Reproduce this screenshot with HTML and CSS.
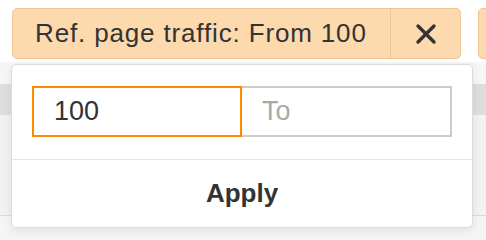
FILE: index.html
```html
<!DOCTYPE html>
<html>
<head>
<meta charset="utf-8">
<link rel="stylesheet" href="styles.css">
</head>
<body>
<div class="page">
  <div class="toolbar">
    <div class="chip">
      <span class="chip-label">Ref. page traffic: From 100</span>
      <span class="chip-close">
        <svg width="24" height="24" viewBox="0 0 24 24"><path d="M4 4 L20 20 M20 4 L4 20" stroke="#333" stroke-width="3.4" stroke-linecap="round" fill="none"/></svg>
      </span>
    </div>
    <div class="chip chip-next"></div>
  </div>
  <div class="gap-strip"></div>
  <div class="table-head"></div>
  <div class="table-body"></div>
  <div class="table-foot"></div>

  <div class="popup">
    <div class="range">
      <input class="field field-active" type="text" value="100">
      <input class="field" type="text" placeholder="To">
    </div>
    <div class="actions">
      <button class="apply" type="button">Apply</button>
    </div>
  </div>
</div>
</body>
</html>
```
FILE: styles.css
```css
* { box-sizing: border-box; }
html, body { margin: 0; padding: 0; }
body {
  font-family: "Liberation Sans", Arial, Helvetica, sans-serif;
  color: #333;
  background: #fff;
}
.page {
  position: relative;
  width: 486px;
  height: 240px;
  overflow: hidden;
}
.toolbar {
  height: 62px;
  padding: 8px 0 0 12px;
  display: flex;
  gap: 17px;
  background: #fff;
}
.chip {
  flex: none;
  height: 51px;
  display: flex;
  align-items: stretch;
  background: #fdd9ae;
  border: 1px solid #efc596;
  border-radius: 5px;
}
.chip-label {
  display: flex;
  align-items: center;
  padding: 0 10px 1px 22px;
  width: 377px;
  font-size: 26px;
  letter-spacing: 0.85px;
  white-space: nowrap;
}
.chip-close {
  width: 70px;
  display: flex;
  align-items: center;
  justify-content: center;
  border-left: 1px solid #efc596;
}
.chip-next { width: 40px; }
.gap-strip { height: 22px; background: #f6f6f6; }
.table-head {
  height: 31px;
  background: #dedede;
}
.table-body {
  height: 101px;
  background: #f2f2f2;
  border-bottom: 1px solid #dadada;
}
.table-foot {
  height: 30px;
  background: #f5f5f5;
}
.popup {
  position: absolute;
  left: 11px;
  top: 64px;
  width: 462px;
  height: 164px;
  background: #fff;
  border: 1px solid #dcdcdc;
  border-radius: 5px;
  box-shadow: 0 3px 10px rgba(0, 0, 0, 0.08);
  display: flex;
  flex-direction: column;
}
.range {
  display: flex;
  padding: 21px 20px 22px 20px;
  border-bottom: 1px solid #e4e4e4;
}
.field {
  width: 210px;
  height: 51px;
  margin: 0;
  padding: 0 0 0 20px;
  border: 2px solid #cccccc;
  border-left: none;
  border-radius: 0;
  outline: none;
  font-family: "Liberation Sans", Arial, Helvetica, sans-serif;
  font-size: 27px;
  color: #333;
  background: #fff;
}
.field::placeholder { color: #aaaaaa; }
.field-active {
  border: 2px solid #ff8a00;
}
.actions {
  flex: 1;
  display: flex;
  align-items: center;
  justify-content: center;
}
.apply {
  border: none;
  background: none;
  padding: 0;
  font-family: "Liberation Sans", Arial, Helvetica, sans-serif;
  font-weight: bold;
  font-size: 26px;
  color: #333;
}
```
